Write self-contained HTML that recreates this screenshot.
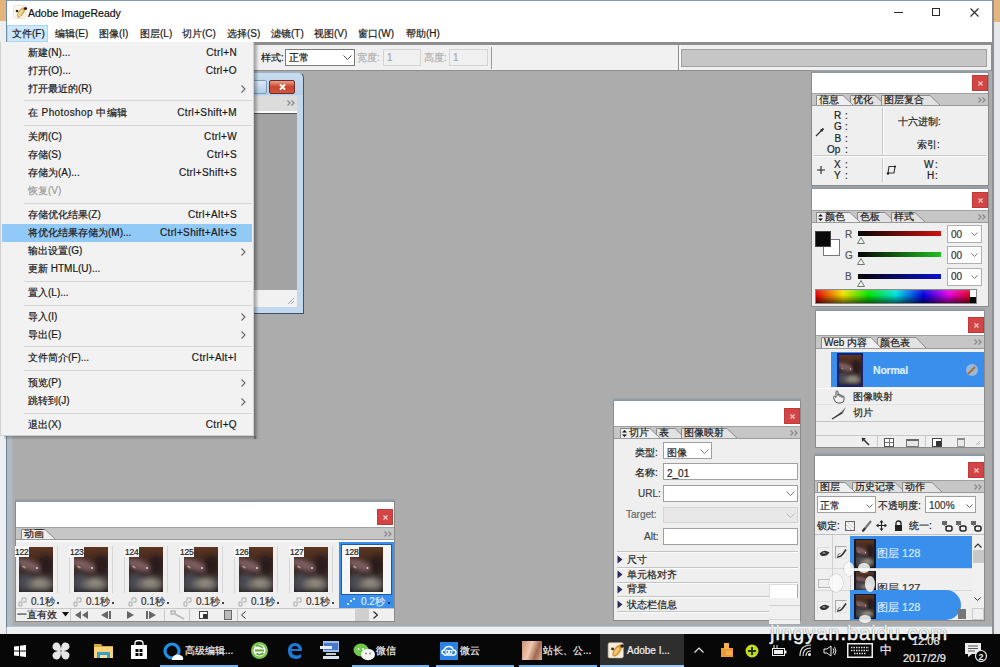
<!DOCTYPE html>
<html><head><meta charset="utf-8"><style>
*{box-sizing:border-box;margin:0;padding:0}
html,body{width:1000px;height:667px;overflow:hidden;background:#acacac;font-family:"Liberation Sans",sans-serif;color:#1e1e1e}
.a{position:absolute}
.t{position:absolute;white-space:nowrap;font-size:10px;line-height:12px;-webkit-text-stroke:0.2px currentColor}
.sc{letter-spacing:0.35px}
.box{position:absolute;background:#fff;border:1px solid #a8a8a8}
</style></head><body>
<svg width="0" height="0" style="position:absolute"><defs>
<filter id="bl" x="-20%" y="-20%" width="140%" height="140%"><feGaussianBlur stdDeviation="2"/></filter>
<linearGradient id="pg" x1="0" y1="0" x2="0" y2="1"><stop offset="0" stop-color="#5e3620"/><stop offset=".35" stop-color="#3c2620"/><stop offset=".7" stop-color="#3a3232"/><stop offset="1" stop-color="#2a2220"/></linearGradient>
<symbol id="photo" viewBox="0 0 34 45" preserveAspectRatio="none">
<rect width="34" height="45" fill="url(#pg)"/>
<g filter="url(#bl)">
<ellipse cx="10" cy="18" rx="13" ry="5" transform="rotate(20 10 18)" fill="#7a5c5e"/>
<ellipse cx="27" cy="18" rx="7" ry="10" fill="#2a1e1c"/>
<ellipse cx="7" cy="36" rx="8" ry="9" fill="#4a4a52"/>
<ellipse cx="21" cy="37" rx="13" ry="7" fill="#6c6864"/>
<ellipse cx="21" cy="36" rx="7" ry="4" fill="#8e887c"/>
<ellipse cx="17" cy="45" rx="16" ry="2.5" fill="#262220"/>
</g>
<ellipse cx="5" cy="20" rx="2" ry="1" fill="#b8a8a8" opacity=".8" transform="rotate(30 5 20)"/>
<circle cx="18" cy="21" r="1" fill="#d8d0c8"/>
</symbol></defs></svg>
<div class="a" style="left:0px;top:0px;width:6px;height:21px;background:#e3b47c"></div>
<div class="a" style="left:0px;top:21px;width:6px;height:613px;background:#eceef0"></div>
<div class="a" style="left:994px;top:0px;width:6px;height:22px;background:#e3b47c"></div>
<div class="a" style="left:994px;top:22px;width:6px;height:612px;background:#e4e6e8"></div>
<div class="a" style="left:6px;top:0px;width:988px;height:634px;background:#acacac"></div>
<div class="a" style="left:6px;top:0px;width:988px;height:1px;background:#7f9dbb"></div>
<div class="a" style="left:6px;top:0px;width:1px;height:42px;background:#6f8aa6"></div>
<div class="a" style="left:6px;top:71px;width:1px;height:556px;background:#6d8292"></div>
<div class="a" style="left:7px;top:71px;width:6px;height:556px;background:linear-gradient(90deg,#aab8c2,#b4bcc4 50%,#aeb2b6)"></div>
<div class="a" style="left:992px;top:71px;width:1px;height:556px;background:#c4c8cc"></div>
<div class="a" style="left:992px;top:0px;width:2px;height:634px;background:#8c9096"></div>
<div class="a" style="left:7px;top:1px;width:985px;height:41px;background:#fff"></div>
<svg class="a" style="left:12px;top:4px" width="16" height="16" viewBox="0 0 16 16"><rect x="1.5" y="1.5" width="12.5" height="13" rx="2" fill="#fbf7ef" stroke="#e4dccc" stroke-width=".8"/><ellipse cx="9" cy="8.5" rx="2.8" ry="6" transform="rotate(35 9 8.5)" fill="#d8a858"/><ellipse cx="8.5" cy="9" rx="1.4" ry="4" transform="rotate(35 8.5 9)" fill="#f0d8a0"/><circle cx="5" cy="7" r="1.3" fill="#3a2a1a"/><circle cx="13.5" cy="4.5" r="1.6" fill="#2a1e10"/></svg>
<div class="t" style="left:28px;top:7.0px;font-size:10.5px;line-height:12px;color:#111">Adobe ImageReady</div>
<div class="a" style="left:894px;top:12px;width:9px;height:1px;background:#2a2a2a"></div>
<div class="a" style="left:932px;top:8px;width:8px;height:8px;border:1px solid #2a2a2a"></div>
<svg class="a" style="left:970px;top:8px" width="9" height="9"><path d="M0.5 0.5 L8.5 8.5 M8.5 0.5 L0.5 8.5" stroke="#2a2a2a" stroke-width="1.1"/></svg>
<div class="a" style="left:7px;top:25px;width:41px;height:17px;background:#cce8ff;border:1px solid #a8d6fb"></div>
<div class="t" style="left:12px;top:28.0px;font-size:10px;line-height:12px;color:#1a1a1a">文件(F)</div>
<div class="t" style="left:55px;top:28.0px;font-size:10px;line-height:12px;color:#1a1a1a">编辑(E)</div>
<div class="t" style="left:99px;top:28.0px;font-size:10px;line-height:12px;color:#1a1a1a">图像(I)</div>
<div class="t" style="left:140px;top:28.0px;font-size:10px;line-height:12px;color:#1a1a1a">图层(L)</div>
<div class="t" style="left:182px;top:28.0px;font-size:10px;line-height:12px;color:#1a1a1a">切片(C)</div>
<div class="t" style="left:227px;top:28.0px;font-size:10px;line-height:12px;color:#1a1a1a">选择(S)</div>
<div class="t" style="left:271px;top:28.0px;font-size:10px;line-height:12px;color:#1a1a1a">滤镜(T)</div>
<div class="t" style="left:314px;top:28.0px;font-size:10px;line-height:12px;color:#1a1a1a">视图(V)</div>
<div class="t" style="left:358px;top:28.0px;font-size:10px;line-height:12px;color:#1a1a1a">窗口(W)</div>
<div class="t" style="left:406px;top:28.0px;font-size:10px;line-height:12px;color:#1a1a1a">帮助(H)</div>
<div class="a" style="left:7px;top:42px;width:985px;height:3px;background:#8e8e8e"></div>
<div class="a" style="left:7px;top:45px;width:985px;height:25px;background:#f0f0f0"></div>
<div class="a" style="left:991px;top:45px;width:1px;height:26px;background:#909090"></div>
<div class="a" style="left:7px;top:70px;width:985px;height:1px;background:#8e8e8e"></div>
<div class="t" style="left:261px;top:51.5px;font-size:10px;line-height:12px;color:#1a1a1a">样式:</div>
<div class="box" style="left:285px;top:49px;width:70px;height:17px;border-color:#7a7a7a"></div>
<div class="t" style="left:289px;top:51.5px;font-size:10px;line-height:12px;color:#111">正常</div>
<svg class="a" style="left:343px;top:55px" width="9" height="6"><path d="M0.5 0.5 L4.5 4.5 L8.5 0.5" stroke="#555" fill="none" stroke-width="1"/></svg>
<div class="t" style="left:357px;top:51.5px;font-size:10px;line-height:12px;color:#b0b0b0">宽度:</div>
<div class="box" style="left:383px;top:49px;width:38px;height:17px;background:#f0f0f0;border-color:#d4d4d4"></div>
<div class="t" style="left:387px;top:51.5px;font-size:10px;line-height:12px;color:#a8a8a8">1</div>
<div class="t" style="left:424px;top:51.5px;font-size:10px;line-height:12px;color:#b0b0b0">高度:</div>
<div class="box" style="left:449px;top:49px;width:39px;height:17px;background:#f0f0f0;border-color:#d4d4d4"></div>
<div class="t" style="left:453px;top:51.5px;font-size:10px;line-height:12px;color:#a8a8a8">1</div>
<div class="a" style="left:491px;top:47px;width:1px;height:22px;background:#999"></div>
<div class="a" style="left:678px;top:45px;width:1px;height:25px;background:#8c8c8c"></div>
<div class="a" style="left:679px;top:45px;width:2px;height:25px;background:#fafafa"></div>
<div class="a" style="left:681px;top:49px;width:306px;height:18px;background:#c6c6c6;border:1px solid #a0a0a0"></div>
<div class="a" style="left:7px;top:626px;width:985px;height:8px;background:#eef0f2"></div>
<div class="a" style="left:7px;top:626px;width:985px;height:1px;background:#b0c6dc"></div>
<div class="a" style="left:150px;top:72px;width:154px;height:242px;background:#c3d9ef;border:1px solid #3a5566;border-top-color:#9ab4cc;border-radius:6px 6px 0 0"></div>
<div class="a" style="left:150px;top:73px;width:153px;height:22px;background:linear-gradient(#c9dcef,#b8d0e8);border-radius:6px 6px 0 0"></div>
<div class="a" style="left:230px;top:80px;width:37px;height:14px;background:linear-gradient(#dbe8f5,#b0cbe6);border:1px solid #7f9cbb;border-radius:2px"></div>
<div class="a" style="left:269px;top:80px;width:26px;height:14px;background:linear-gradient(#e8a090,#c8452c 50%,#d0583c);border:1px solid #6e2a20;border-radius:2px"></div>
<svg class="a" style="left:278px;top:83px" width="9" height="8"><path d="M2 1.5 L7 6.5 M7 1.5 L2 6.5" stroke="#fff" stroke-width="1.8"/></svg>
<div class="a" style="left:155px;top:96px;width:142px;height:15px;background:#dcdcdc"></div>
<svg class="a" style="left:287px;top:100px" width="8" height="6"><path d="M0.5 0.5 L3 3 L0.5 5.5 M4.5 0.5 L7 3 L4.5 5.5" stroke="#888" fill="none" stroke-width="1.2"/></svg>
<div class="a" style="left:155px;top:111px;width:142px;height:2px;background:#fafafa"></div>
<div class="a" style="left:155px;top:113px;width:142px;height:1px;background:#555"></div>
<div class="a" style="left:155px;top:114px;width:142px;height:176px;background:#a3a3a3"></div>
<div class="a" style="left:155px;top:290px;width:142px;height:17px;background:#f1f1f1"></div>
<svg class="a" style="left:287px;top:297px" width="8" height="8"><path d="M7 1 L1 7 M7 4 L4 7" stroke="#aaa" stroke-width="1"/></svg>
<div class="a" style="left:811px;top:72px;width:178px;height:114px;background:#efefef;border:1px solid #8a8a8a"></div>
<div class="a" style="left:811px;top:70px;width:178px;height:3px;background:linear-gradient(#a0a4a8,#8a96a2)"></div>
<div class="a" style="left:812px;top:73px;width:176px;height:21px;background:#fff"></div>
<div class="a" style="left:972px;top:75px;width:16px;height:16px;background:#d34545;box-shadow:inset 0 0 0 1px #c03a3a"><svg class="a" style="left:5.5px;top:5.5px" width="5" height="5"><path d="M0.5 0.5 L4.5 4.5 M4.5 0.5 L0.5 4.5" stroke="#f6c6c6" stroke-width="1.3"/></svg></div>
<svg class="a" style="left:812px;top:93px" width="176" height="13"><rect x="0" y="0" width="176" height="13" fill="#c6c6c6"/><line x1="0" y1="0.5" x2="176" y2="0.5" stroke="#a0a0a0"/><path d="M38.5 13 L38.5 2.5 L63 2.5 L74 13" fill="#e2e2e2" stroke="#8a8a8a" stroke-width="1"/><path d="M69.5 13 L69.5 2.5 L118 2.5 L129 13" fill="#e2e2e2" stroke="#8a8a8a" stroke-width="1"/><path d="M4.5 13 L4.5 2.5 L31 2.5 L42 13" fill="#efefef" stroke="#8a8a8a" stroke-width="1"/><line x1="0" y1="12.5" x2="176" y2="12.5" stroke="#9a9a9a"/></svg>
<div class="t" style="left:819px;top:94.0px;font-size:10px;line-height:12px;color:#1a1a1a">信息</div>
<div class="t" style="left:853px;top:94.0px;font-size:10px;line-height:12px;color:#1a1a1a">优化</div>
<div class="t" style="left:884px;top:94.0px;font-size:10px;line-height:12px;color:#1a1a1a">图层复合</div>
<svg class="a" style="left:978px;top:96.5px" width="8" height="6"><path d="M0.5 0.5 L3 3 L0.5 5.5 M4.5 0.5 L7 3 L4.5 5.5" stroke="#888" fill="none" stroke-width="1.2"/></svg>
<div class="a" style="left:882px;top:108px;width:1px;height:47px;background:#c8c8c8"></div>
<div class="a" style="left:883px;top:108px;width:1px;height:47px;background:#fff"></div>
<div class="a" style="left:814px;top:155px;width:172px;height:1px;background:#c8c8c8"></div>
<div class="a" style="left:814px;top:156px;width:172px;height:1px;background:#fff"></div>
<div class="a" style="left:882px;top:158px;width:1px;height:25px;background:#c8c8c8"></div>
<div class="a" style="left:883px;top:158px;width:1px;height:25px;background:#fff"></div>
<div class="t" style="left:834px;top:109.5px;font-size:10px;line-height:12px;color:#222">R</div>
<div class="t" style="left:845px;top:109.5px;font-size:10px;line-height:12px;color:#222">:</div>
<div class="t" style="left:834px;top:121.0px;font-size:10px;line-height:12px;color:#222">G</div>
<div class="t" style="left:845px;top:121.0px;font-size:10px;line-height:12px;color:#222">:</div>
<div class="t" style="left:834.5px;top:132.5px;font-size:10px;line-height:12px;color:#222">B</div>
<div class="t" style="left:845px;top:132.5px;font-size:10px;line-height:12px;color:#222">:</div>
<div class="t" style="left:827px;top:144.0px;font-size:10px;line-height:12px;color:#222">Op</div>
<div class="t" style="left:845px;top:144.0px;font-size:10px;line-height:12px;color:#222">:</div>
<div class="t" style="left:834px;top:158.5px;font-size:10px;line-height:12px;color:#222">X</div>
<div class="t" style="left:845px;top:158.5px;font-size:10px;line-height:12px;color:#222">:</div>
<div class="t" style="left:834px;top:170.0px;font-size:10px;line-height:12px;color:#222">Y</div>
<div class="t" style="left:845px;top:170.0px;font-size:10px;line-height:12px;color:#222">:</div>
<svg class="a" style="left:815px;top:127px" width="10" height="10"><path d="M1 9 L6 4" stroke="#333" stroke-width="1.3"/><path d="M5 3 L8 1 L9 2 L7 5 Z" fill="#222"/></svg>
<svg class="a" style="left:817px;top:166px" width="8" height="8"><path d="M4 0 V8 M0 4 H8" stroke="#222" stroke-width="1.1"/></svg>
<svg class="a" style="left:886px;top:165px" width="10" height="10"><path d="M3 1.5 H9 L8 8 H2 Z" stroke="#333" stroke-width="1.1" fill="none"/><circle cx="2" cy="8.5" r="1.2" fill="#222"/><circle cx="9" cy="1.5" r="1" fill="#222"/></svg>
<div class="t" style="left:898px;top:116.0px;font-size:10px;line-height:12px;color:#222">十六进制:</div>
<div class="t" style="left:917px;top:139.0px;font-size:10px;line-height:12px;color:#222">索引:</div>
<div class="t" style="left:924px;top:158.5px;font-size:10px;line-height:12px;color:#222">W</div>
<div class="t" style="left:935px;top:158.5px;font-size:10px;line-height:12px;color:#222">:</div>
<div class="t" style="left:927px;top:170.0px;font-size:10px;line-height:12px;color:#222">H</div>
<div class="t" style="left:935px;top:170.0px;font-size:10px;line-height:12px;color:#222">:</div>
<div class="a" style="left:811px;top:188px;width:178px;height:119px;background:#efefef;border:1px solid #8a8a8a"></div>
<div class="a" style="left:811px;top:186px;width:178px;height:3px;background:linear-gradient(#a0a4a8,#8a96a2)"></div>
<div class="a" style="left:812px;top:189px;width:176px;height:21px;background:#fff"></div>
<div class="a" style="left:972px;top:192px;width:16px;height:16px;background:#d34545;box-shadow:inset 0 0 0 1px #c03a3a"><svg class="a" style="left:5.5px;top:5.5px" width="5" height="5"><path d="M0.5 0.5 L4.5 4.5 M4.5 0.5 L0.5 4.5" stroke="#f6c6c6" stroke-width="1.3"/></svg></div>
<svg class="a" style="left:812px;top:210px" width="176" height="13"><rect x="0" y="0" width="176" height="13" fill="#c6c6c6"/><line x1="0" y1="0.5" x2="176" y2="0.5" stroke="#a0a0a0"/><path d="M45.5 13 L45.5 2.5 L73 2.5 L84 13" fill="#e2e2e2" stroke="#8a8a8a" stroke-width="1"/><path d="M79.5 13 L79.5 2.5 L103 2.5 L114 13" fill="#e2e2e2" stroke="#8a8a8a" stroke-width="1"/><path d="M4.5 13 L4.5 2.5 L38 2.5 L49 13" fill="#efefef" stroke="#8a8a8a" stroke-width="1"/><line x1="0" y1="12.5" x2="176" y2="12.5" stroke="#9a9a9a"/></svg>
<svg class="a" style="left:818px;top:213.5px" width="5" height="7"><path d="M2.5 0 L5 2.5 H0 Z M0 4.5 H5 L2.5 7 Z" fill="#111"/></svg>
<div class="t" style="left:825px;top:211.0px;font-size:10px;line-height:12px;color:#1a1a1a">颜色</div>
<div class="t" style="left:860px;top:211.0px;font-size:10px;line-height:12px;color:#1a1a1a">色板</div>
<div class="t" style="left:894px;top:211.0px;font-size:10px;line-height:12px;color:#1a1a1a">样式</div>
<svg class="a" style="left:978px;top:213.5px" width="8" height="6"><path d="M0.5 0.5 L3 3 L0.5 5.5 M4.5 0.5 L7 3 L4.5 5.5" stroke="#888" fill="none" stroke-width="1.2"/></svg>
<div class="a" style="left:823px;top:239px;width:17px;height:17px;background:#fff;border:1px solid #777"></div>
<div class="a" style="left:815px;top:231px;width:16px;height:16px;background:#0a0a0a;border:1px solid #444"></div>
<div class="t" style="left:845px;top:228.5px;font-size:10px;line-height:12px;color:#555">R</div>
<div class="a" style="left:858px;top:231px;width:83px;height:5px;background:linear-gradient(90deg,#050505,#d01010)"></div>
<svg class="a" style="left:857px;top:237px" width="8" height="7"><path d="M4 0.5 L7.5 6.5 H0.5 Z" fill="#f4f4f4" stroke="#6a7a6a"/></svg>
<div class="box" style="left:947px;top:225px;width:35px;height:18px;border-color:#b0b0b0"></div>
<div class="t" style="left:951px;top:228.5px;font-size:10px;line-height:12px;color:#333">00</div>
<svg class="a" style="left:971px;top:232px" width="7" height="5"><path d="M0.5 0.5 L3.5 3.5 L6.5 0.5" stroke="#777" fill="none" stroke-width="1"/></svg>
<div class="t" style="left:845px;top:249.5px;font-size:10px;line-height:12px;color:#555">G</div>
<div class="a" style="left:858px;top:252px;width:83px;height:5px;background:linear-gradient(90deg,#050505,#20c020)"></div>
<svg class="a" style="left:857px;top:258px" width="8" height="7"><path d="M4 0.5 L7.5 6.5 H0.5 Z" fill="#f4f4f4" stroke="#6a7a6a"/></svg>
<div class="box" style="left:947px;top:246px;width:35px;height:18px;border-color:#b0b0b0"></div>
<div class="t" style="left:951px;top:249.5px;font-size:10px;line-height:12px;color:#333">00</div>
<svg class="a" style="left:971px;top:253px" width="7" height="5"><path d="M0.5 0.5 L3.5 3.5 L6.5 0.5" stroke="#777" fill="none" stroke-width="1"/></svg>
<div class="t" style="left:845px;top:271.0px;font-size:10px;line-height:12px;color:#555">B</div>
<div class="a" style="left:858px;top:274px;width:83px;height:5px;background:linear-gradient(90deg,#050505,#0a10d0)"></div>
<svg class="a" style="left:857px;top:280px" width="8" height="7"><path d="M4 0.5 L7.5 6.5 H0.5 Z" fill="#f4f4f4" stroke="#6a7a6a"/></svg>
<div class="box" style="left:947px;top:268px;width:35px;height:18px;border-color:#b0b0b0"></div>
<div class="t" style="left:951px;top:271.0px;font-size:10px;line-height:12px;color:#333">00</div>
<svg class="a" style="left:971px;top:275px" width="7" height="5"><path d="M0.5 0.5 L3.5 3.5 L6.5 0.5" stroke="#777" fill="none" stroke-width="1"/></svg>
<div class="a" style="left:815px;top:289px;width:162px;height:15px;background:linear-gradient(90deg,#e00000 0%,#f0e000 17%,#00e000 33%,#00e0e0 50%,#0000e0 67%,#e000e0 83%,#e00020 96%);border:1px solid #888"></div>
<div class="a" style="left:970px;top:290px;width:6px;height:7px;background:#fff"></div>
<div class="a" style="left:970px;top:297px;width:6px;height:6px;background:#000"></div>
<div class="a" style="left:816px;top:290px;width:154px;height:13px;background:linear-gradient(180deg,rgba(255,255,255,.15),rgba(0,0,0,0) 40%,rgba(0,0,0,.6))"></div>
<div class="a" style="left:815px;top:310px;width:170px;height:138px;background:#efefef;border:1px solid #8a8a8a"></div>
<div class="a" style="left:815px;top:308px;width:170px;height:3px;background:linear-gradient(#a0a4a8,#8a96a2)"></div>
<div class="a" style="left:816px;top:311px;width:168px;height:25px;background:#fff"></div>
<div class="a" style="left:968px;top:317px;width:16px;height:16px;background:#d34545;box-shadow:inset 0 0 0 1px #c03a3a"><svg class="a" style="left:5.5px;top:5.5px" width="5" height="5"><path d="M0.5 0.5 L4.5 4.5 M4.5 0.5 L0.5 4.5" stroke="#f6c6c6" stroke-width="1.3"/></svg></div>
<svg class="a" style="left:816px;top:335px" width="168" height="14"><rect x="0" y="0" width="168" height="14" fill="#c6c6c6"/><line x1="0" y1="0.5" x2="168" y2="0.5" stroke="#a0a0a0"/><path d="M61.5 14 L61.5 2.5 L100 2.5 L111 14" fill="#e2e2e2" stroke="#8a8a8a" stroke-width="1"/><path d="M5.5 14 L5.5 2.5 L55 2.5 L66 14" fill="#efefef" stroke="#8a8a8a" stroke-width="1"/><line x1="0" y1="13.5" x2="168" y2="13.5" stroke="#9a9a9a"/></svg>
<div class="t" style="left:824px;top:336.5px;font-size:10px;line-height:12px;color:#1a1a1a">Web 内容</div>
<div class="t" style="left:880px;top:336.5px;font-size:10px;line-height:12px;color:#1a1a1a">颜色表</div>
<svg class="a" style="left:974px;top:339.0px" width="8" height="6"><path d="M0.5 0.5 L3 3 L0.5 5.5 M4.5 0.5 L7 3 L4.5 5.5" stroke="#888" fill="none" stroke-width="1.2"/></svg>
<div class="a" style="left:816px;top:349px;width:168px;height:3px;background:#efefef"></div>
<div class="a" style="left:831px;top:352px;width:153px;height:35px;background:#3a8eec"></div>
<div class="a" style="left:837px;top:353px;width:26px;height:34px;background:#1a2070;padding:2px"><svg width="22" height="30" style="display:block"><use href="#photo" width="22" height="30"/></svg></div>
<div class="t" style="left:873px;top:364.0px;font-size:10.5px;line-height:12px;color:#dceeff;font-weight:bold;letter-spacing:-0.2px">Normal</div>
<svg class="a" style="left:965px;top:363px" width="14" height="14"><circle cx="7" cy="7" r="6" fill="#9ab8d8"/><path d="M3 11 L10 4" stroke="#b07030" stroke-width="2"/></svg>
<div class="a" style="left:816px;top:388px;width:168px;height:1px;background:#fafafa"></div>
<div class="a" style="left:816px;top:404px;width:168px;height:1px;background:#e2e2e2"></div>
<svg class="a" style="left:832px;top:390px" width="14" height="14"><path d="M4 7 V2 a1 1 0 0 1 2 0 V6 M6 5 a1 1 0 0 1 2 0 V7 M8 6 a1 1 0 0 1 2 0 V8 M10 7 a1 1 0 0 1 2 0 V10 Q12 13 8 13 H6 Q3 13 2 9 L1.5 7.5 a1 1 0 0 1 2 -0.5 L4 8" stroke="#555" fill="none" stroke-width="1"/></svg>
<div class="t" style="left:853px;top:391.0px;font-size:10px;line-height:12px;color:#222">图像映射</div>
<svg class="a" style="left:831px;top:406px" width="17" height="14"><path d="M1 13 L10 6 L15 1 L12 7 Z" fill="#666"/><path d="M1 13 L11 7" stroke="#333" stroke-width="1.2"/></svg>
<div class="t" style="left:853px;top:407.0px;font-size:10px;line-height:12px;color:#222">切片</div>
<div class="a" style="left:816px;top:421px;width:168px;height:1px;background:#c4c4c4"></div>
<div class="a" style="left:816px;top:435px;width:168px;height:1px;background:#c8c8c8"></div>
<div class="a" style="left:877px;top:436px;width:1px;height:11px;background:#c8c8c8"></div>
<div class="a" style="left:925px;top:436px;width:1px;height:11px;background:#c8c8c8"></div>
<svg class="a" style="left:861px;top:437px" width="9" height="9"><path d="M1 1 L8 8" stroke="#333" stroke-width="1.6"/><path d="M1 1 H5 L1 5 Z" fill="#333"/></svg>
<div class="a" style="left:884px;top:438px;width:10px;height:9px;border:1px solid #555;background:linear-gradient(90deg,transparent 4px,#777 4px,#777 5px,transparent 5px),linear-gradient(180deg,transparent 3px,#777 3px,#777 4px,transparent 4px) #fafafa"></div>
<div class="a" style="left:906px;top:439px;width:13px;height:8px;border:1px solid #777;border-top:2px solid #666;background:#e6e6e6"></div>
<div class="a" style="left:932px;top:438px;width:10px;height:9px;border:1px solid #444;background:#fff"><div class="a" style="right:0;bottom:0;width:5px;height:5px;background:#333"></div></div>
<div class="a" style="left:957px;top:438px;width:8px;height:9px;border:1px solid #999;border-top:2px solid #888;background:#e8e8e8"></div>
<svg class="a" style="left:975px;top:440px" width="6" height="6"><path d="M5 1 L1 5 M5 3 L3 5" stroke="#bbb"/></svg>
<div class="a" style="left:814px;top:455px;width:171px;height:166px;background:#efefef;border:1px solid #8a8a8a"></div>
<div class="a" style="left:814px;top:453px;width:171px;height:3px;background:linear-gradient(#a0a4a8,#8a96a2)"></div>
<div class="a" style="left:815px;top:456px;width:169px;height:25px;background:#fff"></div>
<div class="a" style="left:968px;top:462px;width:16px;height:16px;background:#d34545;box-shadow:inset 0 0 0 1px #c03a3a"><svg class="a" style="left:5.5px;top:5.5px" width="5" height="5"><path d="M0.5 0.5 L4.5 4.5 M4.5 0.5 L0.5 4.5" stroke="#f6c6c6" stroke-width="1.3"/></svg></div>
<svg class="a" style="left:815px;top:480px" width="169" height="13"><rect x="0" y="0" width="169" height="13" fill="#c6c6c6"/><line x1="0" y1="0.5" x2="169" y2="0.5" stroke="#a0a0a0"/><path d="M37.5 13 L37.5 2.5 L80 2.5 L91 13" fill="#e2e2e2" stroke="#8a8a8a" stroke-width="1"/><path d="M87.5 13 L87.5 2.5 L117 2.5 L128 13" fill="#e2e2e2" stroke="#8a8a8a" stroke-width="1"/><path d="M2.5 13 L2.5 2.5 L30 2.5 L41 13" fill="#efefef" stroke="#8a8a8a" stroke-width="1"/><line x1="0" y1="12.5" x2="169" y2="12.5" stroke="#9a9a9a"/></svg>
<div class="t" style="left:820px;top:481.0px;font-size:10px;line-height:12px;color:#1a1a1a">图层</div>
<div class="t" style="left:855px;top:481.0px;font-size:10px;line-height:12px;color:#1a1a1a">历史记录</div>
<div class="t" style="left:905px;top:481.0px;font-size:10px;line-height:12px;color:#1a1a1a">动作</div>
<svg class="a" style="left:974px;top:483.5px" width="8" height="6"><path d="M0.5 0.5 L3 3 L0.5 5.5 M4.5 0.5 L7 3 L4.5 5.5" stroke="#888" fill="none" stroke-width="1.2"/></svg>
<div class="box" style="left:817px;top:496px;width:59px;height:17px;border-color:#a0a0a0"></div>
<div class="t" style="left:820px;top:499.5px;font-size:10px;line-height:12px;color:#222">正常</div>
<svg class="a" style="left:866px;top:504px" width="7" height="5"><path d="M0.5 0.5 L3.5 3.5 L6.5 0.5" stroke="#666" fill="none" stroke-width="1"/></svg>
<div class="t" style="left:878px;top:499.5px;font-size:10px;line-height:12px;color:#222">不透明度:</div>
<div class="box" style="left:925px;top:496px;width:51px;height:17px;border-color:#a0a0a0"></div>
<div class="t" style="left:929px;top:499.5px;font-size:10px;line-height:12px;color:#333">100%</div>
<svg class="a" style="left:966px;top:504px" width="7" height="5"><path d="M0.5 0.5 L3.5 3.5 L6.5 0.5" stroke="#666" fill="none" stroke-width="1"/></svg>
<div class="t" style="left:817px;top:520.0px;font-size:10px;line-height:12px;color:#222">锁定:</div>
<div class="a" style="left:845px;top:521px;width:10px;height:10px;border:1px solid #666;background:repeating-linear-gradient(45deg,#d8d8d8 0 1.5px,#fff 1.5px 3px)"></div>
<svg class="a" style="left:861px;top:519px" width="12" height="13"><path d="M2 12 L10 2" stroke="#777" stroke-width="2.2"/><path d="M1.5 12.5 L4 9" stroke="#333" stroke-width="2"/></svg>
<svg class="a" style="left:876px;top:520px" width="11" height="11"><path d="M5.5 1 V10 M1 5.5 H10" stroke="#222" stroke-width="1.1"/><path d="M5.5 0 L3.5 2.5 H7.5Z M5.5 11 L3.5 8.5 H7.5Z M0 5.5 L2.5 3.5 V7.5Z M11 5.5 L8.5 3.5 V7.5Z" fill="#222"/></svg>
<svg class="a" style="left:894px;top:520px" width="9" height="11"><path d="M2 5 V3.5 Q2 1 4.5 1 Q7 1 7 3.5 V5" stroke="#222" fill="none" stroke-width="1.3"/><rect x="1" y="5" width="7" height="6" fill="#222"/></svg>
<div class="t" style="left:909px;top:520.0px;font-size:10px;line-height:12px;color:#222">统一:</div>
<svg class="a" style="left:941px;top:520px" width="12" height="12"><path d="M1 3 L6 8" stroke="#888" stroke-width="1"/><rect x="1" y="1" width="5" height="4" fill="#666"/><rect x="5" y="6" width="6" height="5" rx="2" fill="none" stroke="#222" stroke-width="1.5"/></svg>
<svg class="a" style="left:955px;top:520px" width="12" height="12"><path d="M1 3 L6 8" stroke="#888" stroke-width="1"/><rect x="1" y="1" width="5" height="4" fill="#666"/><rect x="5" y="6" width="6" height="5" rx="2" fill="none" stroke="#222" stroke-width="1.5"/></svg>
<svg class="a" style="left:970px;top:520px" width="12" height="12"><path d="M1 3 L6 8" stroke="#888" stroke-width="1"/><rect x="1" y="1" width="5" height="4" fill="#666"/><rect x="5" y="6" width="6" height="5" rx="2" fill="none" stroke="#222" stroke-width="1.5"/></svg>
<div class="a" style="left:815px;top:534px;width:169px;height:1px;background:#c0c0c0"></div>
<div class="a" style="left:815px;top:535px;width:157px;height:85px;background:#efefef"></div>
<div class="a" style="left:832px;top:535px;width:1px;height:85px;background:#d0d0d0"></div>
<div class="a" style="left:850px;top:535px;width:1px;height:85px;background:#d0d0d0"></div>
<div class="a" style="left:815px;top:568px;width:157px;height:1px;background:#d8d8d8"></div>
<div class="a" style="left:815px;top:590px;width:157px;height:1px;background:#d8d8d8"></div>
<div class="a" style="left:972px;top:535px;width:12px;height:73px;background:#f0f0f0"></div>
<svg class="a" style="left:974px;top:543px" width="8" height="5"><path d="M0.5 4.5 L4 1 L7.5 4.5" stroke="#333" fill="none" stroke-width="1.2"/></svg>
<div class="a" style="left:973px;top:550px;width:11px;height:13px;background:#c8c8c8"></div>
<svg class="a" style="left:974px;top:597px" width="7" height="5"><path d="M0.5 0.5 L3.5 3.5 L6.5 0.5" stroke="#333" fill="none" stroke-width="1"/></svg>
<div class="a" style="left:817px;top:547px;width:13px;height:13px;border:1px solid #ddd;border-right:none;border-bottom:none"></div>
<svg class="a" style="left:819px;top:549px" width="11" height="9"><path d="M0.5 4.5 Q5 -0.5 10.5 3.5 Q7 8.5 2 6.5 Z" fill="#333"/><ellipse cx="5" cy="4" rx="1.6" ry="1.1" fill="#888"/></svg>
<div class="a" style="left:835px;top:546px;width:12px;height:13px;border:1px solid #aaa;border-right-color:#e4e4e4;border-bottom-color:#e4e4e4"></div>
<svg class="a" style="left:836px;top:548px" width="11" height="10"><path d="M1 9 Q4 9.5 6.5 6.5 L10 1.5" stroke="#333" fill="none" stroke-width="1.6"/><path d="M1.5 8.5 Q2 5 4.5 5.5" stroke="#777" fill="none" stroke-width="1"/></svg>
<div class="a" style="left:850px;top:536px;width:122px;height:32px;background:#3a8eec"></div>
<div class="a" style="left:854px;top:539px;width:22px;height:29px;background:#141a2a;padding:1px 2px"><svg width="18" height="27" style="display:block"><use href="#photo" width="18" height="27"/></svg></div>
<div class="t" style="left:877px;top:547.0px;font-size:11px;line-height:12px;color:#d8ecff">图层 128</div>
<div class="a" style="left:818px;top:579px;width:12px;height:9px;border:1px solid #bbb;border-right:none"></div>
<div class="a" style="left:854px;top:571px;width:22px;height:20px;background:#141a2a;padding:1px 2px"><svg width="18" height="18" style="display:block"><use href="#photo" width="18" height="18"/></svg></div>
<div class="t" style="left:877px;top:582.0px;font-size:11px;line-height:12px;color:#333">图层 127</div>
<div class="a" style="left:817px;top:601px;width:13px;height:13px;border:1px solid #ddd;border-right:none;border-bottom:none"></div>
<svg class="a" style="left:819px;top:603px" width="11" height="9"><path d="M0.5 4.5 Q5 -0.5 10.5 3.5 Q7 8.5 2 6.5 Z" fill="#333"/><ellipse cx="5" cy="4" rx="1.6" ry="1.1" fill="#888"/></svg>
<div class="a" style="left:835px;top:600px;width:12px;height:13px;border:1px solid #aaa;border-right-color:#e4e4e4;border-bottom-color:#e4e4e4"></div>
<svg class="a" style="left:836px;top:602px" width="11" height="10"><path d="M1 9 Q4 9.5 6.5 6.5 L10 1.5" stroke="#333" fill="none" stroke-width="1.6"/><path d="M1.5 8.5 Q2 5 4.5 5.5" stroke="#777" fill="none" stroke-width="1"/></svg>
<div class="a" style="left:850px;top:590px;width:111px;height:30px;background:#3a8eec;border-radius:0 15px 15px 0"></div>
<div class="a" style="left:854px;top:594px;width:22px;height:25px;background:#141a2a;padding:1px 2px"><svg width="18" height="23" style="display:block"><use href="#photo" width="18" height="23"/></svg></div>
<div class="t" style="left:877px;top:600.5px;font-size:11px;line-height:12px;color:#d8ecff">图层 128</div>
<div class="a" style="left:958px;top:609px;width:8px;height:10px;background:#777"></div>
<div class="a" style="left:972px;top:608px;width:12px;height:12px;background:#f0f0f0;border:1px solid #ccc"></div>
<div class="a" style="left:843.5px;top:561.5px;width:10px;height:14px;border-radius:50%;background:rgba(250,250,250,.85);box-shadow:0 0 0 0.6px rgba(120,120,120,.35)"></div>
<div class="a" style="left:858px;top:563px;width:12px;height:10px;border-radius:50%;background:rgba(250,250,250,.85);box-shadow:0 0 0 0.6px rgba(120,120,120,.35)"></div>
<div class="a" style="left:829px;top:574px;width:14px;height:18px;border-radius:50%;background:rgba(250,250,250,.85);box-shadow:0 0 0 0.6px rgba(120,120,120,.35)"></div>
<div class="a" style="left:865px;top:576px;width:10px;height:16px;border-radius:50%;background:rgba(250,250,250,.85);box-shadow:0 0 0 0.6px rgba(120,120,120,.35)"></div>
<div class="a" style="left:859px;top:615px;width:12px;height:8px;border-radius:50%;background:rgba(250,250,250,.85);box-shadow:0 0 0 0.6px rgba(120,120,120,.35)"></div>
<div class="a" style="left:613px;top:400px;width:188px;height:221px;background:#efefef;border:1px solid #8a8a8a"></div>
<div class="a" style="left:613px;top:398px;width:188px;height:3px;background:linear-gradient(#a0a4a8,#8a96a2)"></div>
<div class="a" style="left:614px;top:401px;width:186px;height:25px;background:#fff"></div>
<div class="a" style="left:784px;top:408px;width:16px;height:16px;background:#d34545;box-shadow:inset 0 0 0 1px #c03a3a"><svg class="a" style="left:5.5px;top:5.5px" width="5" height="5"><path d="M0.5 0.5 L4.5 4.5 M4.5 0.5 L0.5 4.5" stroke="#f6c6c6" stroke-width="1.3"/></svg></div>
<svg class="a" style="left:614px;top:426px" width="186" height="13"><rect x="0" y="0" width="186" height="13" fill="#c6c6c6"/><line x1="0" y1="0.5" x2="186" y2="0.5" stroke="#a0a0a0"/><path d="M42.5 13 L42.5 2.5 L61 2.5 L72 13" fill="#e2e2e2" stroke="#8a8a8a" stroke-width="1"/><path d="M67.5 13 L67.5 2.5 L113 2.5 L124 13" fill="#e2e2e2" stroke="#8a8a8a" stroke-width="1"/><path d="M6.5 13 L6.5 2.5 L36 2.5 L47 13" fill="#efefef" stroke="#8a8a8a" stroke-width="1"/><line x1="0" y1="12.5" x2="186" y2="12.5" stroke="#9a9a9a"/></svg>
<svg class="a" style="left:622px;top:429.5px" width="5" height="7"><path d="M2.5 0 L5 2.5 H0 Z M0 4.5 H5 L2.5 7 Z" fill="#111"/></svg>
<div class="t" style="left:629px;top:427.0px;font-size:10px;line-height:12px;color:#1a1a1a">切片</div>
<div class="t" style="left:659px;top:427.0px;font-size:10px;line-height:12px;color:#1a1a1a">表</div>
<div class="t" style="left:684px;top:427.0px;font-size:10px;line-height:12px;color:#1a1a1a">图像映射</div>
<svg class="a" style="left:790px;top:429.5px" width="8" height="6"><path d="M0.5 0.5 L3 3 L0.5 5.5 M4.5 0.5 L7 3 L4.5 5.5" stroke="#888" fill="none" stroke-width="1.2"/></svg>
<div class="t" style="left:635px;top:446.5px;font-size:10px;line-height:12px;color:#222">类型:</div>
<div class="box" style="left:663px;top:442px;width:49px;height:17px;border-color:#a0a0a0"></div>
<div class="t" style="left:667px;top:446.5px;font-size:10px;line-height:12px;color:#222">图像</div>
<svg class="a" style="left:700px;top:449px" width="9" height="6"><path d="M0.5 0.5 L4.5 4.5 L8.5 0.5" stroke="#777" fill="none" stroke-width="1"/></svg>
<div class="t" style="left:635px;top:467.0px;font-size:10px;line-height:12px;color:#222">名称:</div>
<div class="box" style="left:663px;top:463px;width:135px;height:17px;border-color:#a0a0a0"></div>
<div class="t" style="left:667px;top:467.5px;font-size:10px;line-height:12px;color:#222">2_01</div>
<div class="t" style="left:638px;top:487.5px;font-size:10px;line-height:12px;color:#444">URL:</div>
<div class="box" style="left:663px;top:485px;width:135px;height:17px;border-color:#a0a0a0"></div>
<svg class="a" style="left:786px;top:491px" width="9" height="6"><path d="M0.5 0.5 L4.5 4.5 L8.5 0.5" stroke="#777" fill="none" stroke-width="1"/></svg>
<div class="t" style="left:626px;top:509.0px;font-size:10px;line-height:12px;color:#666">Target:</div>
<div class="box" style="left:663px;top:507px;width:135px;height:16px;background:#e8e8e8;border-color:#d4d4d4"></div>
<svg class="a" style="left:786px;top:513px" width="9" height="6"><path d="M0.5 0.5 L4.5 4.5 L8.5 0.5" stroke="#bbb" fill="none" stroke-width="1"/></svg>
<div class="t" style="left:644px;top:530.5px;font-size:10px;line-height:12px;color:#444">Alt:</div>
<div class="box" style="left:663px;top:528px;width:135px;height:17px;border-color:#a0a0a0"></div>
<div class="a" style="left:617px;top:551px;width:181px;height:1px;background:#c4c4c4"></div>
<div class="a" style="left:617px;top:552px;width:181px;height:1px;background:#fbfbfb"></div>
<div class="a" style="left:617px;top:567px;width:181px;height:1px;background:#c4c4c4"></div>
<div class="a" style="left:617px;top:568px;width:181px;height:1px;background:#fbfbfb"></div>
<div class="a" style="left:617px;top:582px;width:181px;height:1px;background:#c4c4c4"></div>
<div class="a" style="left:617px;top:583px;width:181px;height:1px;background:#fbfbfb"></div>
<div class="a" style="left:617px;top:596px;width:181px;height:1px;background:#c4c4c4"></div>
<div class="a" style="left:617px;top:597px;width:181px;height:1px;background:#fbfbfb"></div>
<div class="a" style="left:617px;top:611px;width:181px;height:1px;background:#c4c4c4"></div>
<div class="a" style="left:617px;top:612px;width:181px;height:1px;background:#fbfbfb"></div>
<svg class="a" style="left:617px;top:555.0px" width="6" height="9"><path d="M0.5 0.5 L5.5 4.5 L0.5 8.5 Z" fill="#2a2a5a"/></svg>
<div class="t" style="left:627px;top:553.5px;font-size:10px;line-height:12px;color:#222">尺寸</div>
<svg class="a" style="left:617px;top:570.0px" width="6" height="9"><path d="M0.5 0.5 L5.5 4.5 L0.5 8.5 Z" fill="#2a2a5a"/></svg>
<div class="t" style="left:627px;top:568.5px;font-size:10px;line-height:12px;color:#222">单元格对齐</div>
<svg class="a" style="left:617px;top:584.5px" width="6" height="9"><path d="M0.5 0.5 L5.5 4.5 L0.5 8.5 Z" fill="#2a2a5a"/></svg>
<div class="t" style="left:627px;top:583.0px;font-size:10px;line-height:12px;color:#222">背景</div>
<svg class="a" style="left:617px;top:600.0px" width="6" height="9"><path d="M0.5 0.5 L5.5 4.5 L0.5 8.5 Z" fill="#2a2a5a"/></svg>
<div class="t" style="left:627px;top:598.5px;font-size:10px;line-height:12px;color:#222">状态栏信息</div>
<div class="a" style="left:769px;top:584px;width:29px;height:15px;background:#fff;border:1px solid #ddd;border-bottom-color:#aaa;border-right-color:#aaa"></div>
<div class="a" style="left:769px;top:598px;width:31px;height:26px;background:#f0f0f0"></div>
<div class="a" style="left:769px;top:605px;width:31px;height:1px;background:#d0d0d0"></div>
<div class="a" style="left:769px;top:619px;width:31px;height:1px;background:#d8d8d8"></div>
<div class="a" style="left:15px;top:501px;width:380px;height:121px;background:#efefef;border:1px solid #8a8a8a;border-top:1px solid #5a6a7a"></div>
<div class="a" style="left:15px;top:499px;width:380px;height:3px;background:linear-gradient(#a0a4a8,#8a96a2)"></div>
<div class="a" style="left:16px;top:502px;width:378px;height:25px;background:#fff"></div>
<div class="a" style="left:377px;top:509px;width:16px;height:16px;background:#d34545;box-shadow:inset 0 0 0 1px #c03a3a"><svg class="a" style="left:5.5px;top:5.5px" width="5" height="5"><path d="M0.5 0.5 L4.5 4.5 M4.5 0.5 L0.5 4.5" stroke="#f6c6c6" stroke-width="1.3"/></svg></div>
<svg class="a" style="left:16px;top:527px" width="378" height="13"><rect x="0" y="0" width="378" height="13" fill="#c6c6c6"/><line x1="0" y1="0.5" x2="378" y2="0.5" stroke="#a0a0a0"/><path d="M5.5 13 L5.5 2.5 L29 2.5 L40 13" fill="#efefef" stroke="#8a8a8a" stroke-width="1"/><line x1="0" y1="12.5" x2="378" y2="12.5" stroke="#9a9a9a"/></svg>
<div class="t" style="left:24px;top:528.0px;font-size:10px;line-height:12px;color:#1a1a1a">动画</div>
<svg class="a" style="left:384px;top:530.5px" width="8" height="6"><path d="M0.5 0.5 L3 3 L0.5 5.5 M4.5 0.5 L7 3 L4.5 5.5" stroke="#888" fill="none" stroke-width="1.2"/></svg>
<div class="a" style="left:16px;top:540px;width:378px;height:2px;background:#fafafa"></div>
<div class="a" style="left:14px;top:546px;width:1px;height:47px;background:#d6d6d6"></div>
<div class="a" style="left:57px;top:546px;width:1px;height:47px;background:#d6d6d6"></div>
<svg class="a" style="left:19px;top:547px" width="34" height="45"><use href="#photo" width="34" height="45"/></svg>
<div class="a" style="left:14px;top:546px;width:15px;height:11px;background:#f6f6f6"></div>
<div class="t" style="left:15px;top:545.5px;font-size:8.5px;line-height:12px;color:#222;letter-spacing:-0.2px">122</div>
<svg class="a" style="left:18px;top:597px" width="9" height="10"><path d="M1 9 V5 H4 V9 Z M4 4 V1 H8 V5 H5" stroke="#aaa" fill="none" stroke-width="1"/></svg>
<div class="t" style="left:31px;top:596.0px;font-size:10px;line-height:12px;color:#333">0.1秒</div>
<div class="a" style="left:57px;top:602px;width:2px;height:2px;background:#444"></div>
<div class="a" style="left:69px;top:546px;width:1px;height:47px;background:#d6d6d6"></div>
<div class="a" style="left:112px;top:546px;width:1px;height:47px;background:#d6d6d6"></div>
<svg class="a" style="left:74px;top:547px" width="34" height="45"><use href="#photo" width="34" height="45"/></svg>
<div class="a" style="left:69px;top:546px;width:15px;height:11px;background:#f6f6f6"></div>
<div class="t" style="left:70px;top:545.5px;font-size:8.5px;line-height:12px;color:#222;letter-spacing:-0.2px">123</div>
<svg class="a" style="left:73px;top:597px" width="9" height="10"><path d="M1 9 V5 H4 V9 Z M4 4 V1 H8 V5 H5" stroke="#aaa" fill="none" stroke-width="1"/></svg>
<div class="t" style="left:86px;top:596.0px;font-size:10px;line-height:12px;color:#333">0.1秒</div>
<div class="a" style="left:112px;top:602px;width:2px;height:2px;background:#444"></div>
<div class="a" style="left:124px;top:546px;width:1px;height:47px;background:#d6d6d6"></div>
<div class="a" style="left:167px;top:546px;width:1px;height:47px;background:#d6d6d6"></div>
<svg class="a" style="left:129px;top:547px" width="34" height="45"><use href="#photo" width="34" height="45"/></svg>
<div class="a" style="left:124px;top:546px;width:15px;height:11px;background:#f6f6f6"></div>
<div class="t" style="left:125px;top:545.5px;font-size:8.5px;line-height:12px;color:#222;letter-spacing:-0.2px">124</div>
<svg class="a" style="left:128px;top:597px" width="9" height="10"><path d="M1 9 V5 H4 V9 Z M4 4 V1 H8 V5 H5" stroke="#aaa" fill="none" stroke-width="1"/></svg>
<div class="t" style="left:141px;top:596.0px;font-size:10px;line-height:12px;color:#333">0.1秒</div>
<div class="a" style="left:167px;top:602px;width:2px;height:2px;background:#444"></div>
<div class="a" style="left:179px;top:546px;width:1px;height:47px;background:#d6d6d6"></div>
<div class="a" style="left:222px;top:546px;width:1px;height:47px;background:#d6d6d6"></div>
<svg class="a" style="left:184px;top:547px" width="34" height="45"><use href="#photo" width="34" height="45"/></svg>
<div class="a" style="left:179px;top:546px;width:15px;height:11px;background:#f6f6f6"></div>
<div class="t" style="left:180px;top:545.5px;font-size:8.5px;line-height:12px;color:#222;letter-spacing:-0.2px">125</div>
<svg class="a" style="left:183px;top:597px" width="9" height="10"><path d="M1 9 V5 H4 V9 Z M4 4 V1 H8 V5 H5" stroke="#aaa" fill="none" stroke-width="1"/></svg>
<div class="t" style="left:196px;top:596.0px;font-size:10px;line-height:12px;color:#333">0.1秒</div>
<div class="a" style="left:222px;top:602px;width:2px;height:2px;background:#444"></div>
<div class="a" style="left:234px;top:546px;width:1px;height:47px;background:#d6d6d6"></div>
<div class="a" style="left:277px;top:546px;width:1px;height:47px;background:#d6d6d6"></div>
<svg class="a" style="left:239px;top:547px" width="34" height="45"><use href="#photo" width="34" height="45"/></svg>
<div class="a" style="left:234px;top:546px;width:15px;height:11px;background:#f6f6f6"></div>
<div class="t" style="left:235px;top:545.5px;font-size:8.5px;line-height:12px;color:#222;letter-spacing:-0.2px">126</div>
<svg class="a" style="left:238px;top:597px" width="9" height="10"><path d="M1 9 V5 H4 V9 Z M4 4 V1 H8 V5 H5" stroke="#aaa" fill="none" stroke-width="1"/></svg>
<div class="t" style="left:251px;top:596.0px;font-size:10px;line-height:12px;color:#333">0.1秒</div>
<div class="a" style="left:277px;top:602px;width:2px;height:2px;background:#444"></div>
<div class="a" style="left:289px;top:546px;width:1px;height:47px;background:#d6d6d6"></div>
<div class="a" style="left:332px;top:546px;width:1px;height:47px;background:#d6d6d6"></div>
<svg class="a" style="left:294px;top:547px" width="34" height="45"><use href="#photo" width="34" height="45"/></svg>
<div class="a" style="left:289px;top:546px;width:15px;height:11px;background:#f6f6f6"></div>
<div class="t" style="left:290px;top:545.5px;font-size:8.5px;line-height:12px;color:#222;letter-spacing:-0.2px">127</div>
<svg class="a" style="left:293px;top:597px" width="9" height="10"><path d="M1 9 V5 H4 V9 Z M4 4 V1 H8 V5 H5" stroke="#aaa" fill="none" stroke-width="1"/></svg>
<div class="t" style="left:306px;top:596.0px;font-size:10px;line-height:12px;color:#333">0.1秒</div>
<div class="a" style="left:332px;top:602px;width:2px;height:2px;background:#444"></div>
<div class="a" style="left:13px;top:540px;width:2px;height:81px;background:#acacac"></div>
<div class="a" style="left:339px;top:542px;width:55px;height:66px;background:#3a8eec"></div>
<div class="a" style="left:341px;top:544px;width:51px;height:51px;background:#f6f6f6;border:1px solid #1d5aa8"></div>
<svg class="a" style="left:350px;top:547px" width="33" height="45"><use href="#photo" width="33" height="45"/></svg>
<div class="a" style="left:344px;top:546px;width:15px;height:11px;background:#f6f6f6"></div>
<div class="t" style="left:345px;top:545.5px;font-size:8.5px;line-height:12px;color:#222;letter-spacing:-0.2px">128</div>
<svg class="a" style="left:346px;top:597px" width="10" height="9"><circle cx="2" cy="7" r="1" fill="#fff"/><circle cx="5" cy="4" r="1" fill="#fff"/><circle cx="8" cy="2" r="1" fill="#fff"/></svg>
<div class="t" style="left:361px;top:596.0px;font-size:10px;line-height:12px;color:#dbeeff">0.2秒</div>
<div class="a" style="left:388px;top:602px;width:2px;height:2px;background:#10306a"></div>
<div class="a" style="left:16px;top:608px;width:378px;height:1px;background:#c8c8c8"></div>
<div class="a" style="left:16px;top:609px;width:378px;height:12px;background:#f0f0f0"></div>
<div class="t" style="left:17px;top:609.0px;font-size:10px;line-height:12px;color:#222">一直有效</div>
<svg class="a" style="left:62px;top:612px" width="7" height="5"><path d="M0 0 H7 L3.5 4.5 Z" fill="#111"/></svg>
<div class="a" style="left:70px;top:609px;width:1px;height:12px;background:#c8c8c8"></div>
<div class="a" style="left:164px;top:609px;width:1px;height:12px;background:#c8c8c8"></div>
<div class="a" style="left:189px;top:609px;width:1px;height:12px;background:#c8c8c8"></div>
<div class="a" style="left:237px;top:609px;width:1px;height:12px;background:#c8c8c8"></div>
<svg class="a" style="left:74px;top:610px" width="90" height="10"><path d="M1 5 L7 1 V9 Z M8 5 L14 1 V9 Z" fill="#666"/><path d="M27 5 L34 1 V9 Z" fill="#666"/><rect x="35" y="1" width="2" height="8" fill="#666"/><path d="M53 1 L60 5 L53 9 Z" fill="#666"/><rect x="72" y="1" width="2" height="8" fill="#666"/><path d="M75 1 L82 5 L75 9 Z" fill="#666"/></svg>
<svg class="a" style="left:170px;top:610px" width="16" height="10"><rect x="1" y="1" width="4" height="3" fill="none" stroke="#999"/><path d="M5 4 L14 9" stroke="#bbb" stroke-width="2"/></svg>
<div class="a" style="left:199px;top:611px;width:9px;height:8px;border:1px solid #444;background:#fff"><div class="a" style="right:0;bottom:0;width:4px;height:4px;background:#333"></div></div>
<div class="a" style="left:224px;top:610px;width:8px;height:10px;border:1px solid #666;background:#bbb"></div>
<svg class="a" style="left:241px;top:611px" width="5" height="8"><path d="M4.5 0.5 L0.5 4 L4.5 7.5" stroke="#333" fill="none"/></svg>
<div class="a" style="left:355px;top:609px;width:14px;height:12px;background:#cfcfcf"></div>
<svg class="a" style="left:373px;top:611px" width="5" height="8"><path d="M0.5 0.5 L4.5 4 L0.5 7.5" stroke="#222" fill="none" stroke-width="1.2"/></svg>
<div class="a" style="left:254px;top:45px;width:5px;height:394px;background:linear-gradient(90deg,rgba(0,0,0,.35),rgba(0,0,0,0))"></div>
<div class="a" style="left:4px;top:436px;width:252px;height:4px;background:linear-gradient(180deg,rgba(0,0,0,.25),rgba(0,0,0,0))"></div>
<div class="a" style="left:0;top:42px;width:254px;height:394px;background:#f2f2f2;border:1px solid #d0d0d0;border-top:none"></div>
<div class="a" style="left:2px;top:224px;width:250px;height:18px;background:#91c9f7"></div>
<div class="t" style="left:28px;top:46.6px;font-size:10px;line-height:12px;color:#1a1a1a">新建(N)...</div>
<div class="t" style="right:763px;top:46.6px;font-size:10px;line-height:12px;color:#1a1a1a;letter-spacing:0.35px">Ctrl+N</div>
<div class="t" style="left:28px;top:64.6px;font-size:10px;line-height:12px;color:#1a1a1a">打开(O)...</div>
<div class="t" style="right:763px;top:64.6px;font-size:10px;line-height:12px;color:#1a1a1a;letter-spacing:0.35px">Ctrl+O</div>
<div class="t" style="left:28px;top:82.6px;font-size:10px;line-height:12px;color:#1a1a1a">打开最近的(R)</div>
<svg class="a" style="left:241px;top:85px" width="5" height="8"><path d="M0.5 0.5 L4 4 L0.5 7.5" stroke="#666" fill="none" stroke-width="1.1"/></svg>
<div class="a" style="left:24px;top:100px;width:228px;height:1px;background:#d6d6d6"></div>
<div class="t" style="left:28px;top:106.6px;font-size:10px;line-height:12px;color:#1a1a1a;letter-spacing:0.4px">在 Photoshop 中编辑</div>
<div class="t" style="right:763px;top:106.6px;font-size:10px;line-height:12px;color:#1a1a1a;letter-spacing:0.35px">Ctrl+Shift+M</div>
<div class="a" style="left:24px;top:125px;width:228px;height:1px;background:#d6d6d6"></div>
<div class="t" style="left:28px;top:130.5px;font-size:10px;line-height:12px;color:#1a1a1a">关闭(C)</div>
<div class="t" style="right:763px;top:130.5px;font-size:10px;line-height:12px;color:#1a1a1a;letter-spacing:0.35px">Ctrl+W</div>
<div class="t" style="left:28px;top:148.5px;font-size:10px;line-height:12px;color:#1a1a1a">存储(S)</div>
<div class="t" style="right:763px;top:148.5px;font-size:10px;line-height:12px;color:#1a1a1a;letter-spacing:0.35px">Ctrl+S</div>
<div class="t" style="left:28px;top:166.5px;font-size:10px;line-height:12px;color:#1a1a1a">存储为(A)...</div>
<div class="t" style="right:763px;top:166.5px;font-size:10px;line-height:12px;color:#1a1a1a;letter-spacing:0.35px">Ctrl+Shift+S</div>
<div class="t" style="left:28px;top:184.5px;font-size:10px;line-height:12px;color:#9c9c9c">恢复(V)</div>
<div class="a" style="left:24px;top:203px;width:228px;height:1px;background:#d6d6d6"></div>
<div class="t" style="left:28px;top:208.5px;font-size:10px;line-height:12px;color:#1a1a1a">存储优化结果(Z)</div>
<div class="t" style="right:763px;top:208.5px;font-size:10px;line-height:12px;color:#1a1a1a;letter-spacing:0.35px">Ctrl+Alt+S</div>
<div class="t" style="left:28px;top:226.5px;font-size:10px;line-height:12px;color:#1a1a1a">将优化结果存储为(M)...</div>
<div class="t" style="right:763px;top:226.5px;font-size:10px;line-height:12px;color:#1a1a1a;letter-spacing:0.35px">Ctrl+Shift+Alt+S</div>
<div class="t" style="left:28px;top:245.0px;font-size:10px;line-height:12px;color:#1a1a1a">输出设置(G)</div>
<svg class="a" style="left:241px;top:248px" width="5" height="8"><path d="M0.5 0.5 L4 4 L0.5 7.5" stroke="#666" fill="none" stroke-width="1.1"/></svg>
<div class="t" style="left:28px;top:263.0px;font-size:10px;line-height:12px;color:#1a1a1a">更新 HTML(U)...</div>
<div class="a" style="left:24px;top:281px;width:228px;height:1px;background:#d6d6d6"></div>
<div class="t" style="left:28px;top:287.0px;font-size:10px;line-height:12px;color:#1a1a1a">置入(L)...</div>
<div class="a" style="left:24px;top:305px;width:228px;height:1px;background:#d6d6d6"></div>
<div class="t" style="left:28px;top:310.6px;font-size:10px;line-height:12px;color:#1a1a1a">导入(I)</div>
<svg class="a" style="left:241px;top:313px" width="5" height="8"><path d="M0.5 0.5 L4 4 L0.5 7.5" stroke="#666" fill="none" stroke-width="1.1"/></svg>
<div class="t" style="left:28px;top:328.8px;font-size:10px;line-height:12px;color:#1a1a1a">导出(E)</div>
<svg class="a" style="left:241px;top:331px" width="5" height="8"><path d="M0.5 0.5 L4 4 L0.5 7.5" stroke="#666" fill="none" stroke-width="1.1"/></svg>
<div class="a" style="left:24px;top:346px;width:228px;height:1px;background:#d6d6d6"></div>
<div class="t" style="left:28px;top:352.4px;font-size:10px;line-height:12px;color:#1a1a1a">文件简介(F)...</div>
<div class="t" style="right:763px;top:352.4px;font-size:10px;line-height:12px;color:#1a1a1a;letter-spacing:0.35px">Ctrl+Alt+I</div>
<div class="a" style="left:24px;top:370px;width:228px;height:1px;background:#d6d6d6"></div>
<div class="t" style="left:28px;top:376.6px;font-size:10px;line-height:12px;color:#1a1a1a">预览(P)</div>
<svg class="a" style="left:241px;top:379px" width="5" height="8"><path d="M0.5 0.5 L4 4 L0.5 7.5" stroke="#666" fill="none" stroke-width="1.1"/></svg>
<div class="t" style="left:28px;top:395.0px;font-size:10px;line-height:12px;color:#1a1a1a">跳转到(J)</div>
<svg class="a" style="left:241px;top:398px" width="5" height="8"><path d="M0.5 0.5 L4 4 L0.5 7.5" stroke="#666" fill="none" stroke-width="1.1"/></svg>
<div class="a" style="left:24px;top:413px;width:228px;height:1px;background:#d6d6d6"></div>
<div class="t" style="left:28px;top:418.5px;font-size:10px;line-height:12px;color:#1a1a1a">退出(X)</div>
<div class="t" style="right:763px;top:418.5px;font-size:10px;line-height:12px;color:#1a1a1a;letter-spacing:0.35px">Ctrl+Q</div>
<div class="a" style="left:0px;top:634px;width:1000px;height:33px;background:#070707"></div>
<svg class="a" style="left:14px;top:645px" width="12" height="12"><path d="M0 1.6 L5 0.9 V5.6 H0 Z M6 0.8 L12 0 V5.6 H6 Z M0 6.4 H5 V11.1 L0 10.4 Z M6 6.4 H12 V12 L6 11.2 Z" fill="#fff"/></svg>
<svg class="a" style="left:52px;top:642px" width="18" height="18" viewBox="0 0 18 18"><g fill="#e6e6e6"><path d="M9 8.2 C9 3 7 0.5 4.5 0.5 C2 0.5 0.5 2.5 0.5 5 C0.5 7.5 3 9 8.2 9 Z"/><path d="M9.8 9 C15 9 17.5 7 17.5 4.5 C17.5 2 15.5 0.5 13 0.5 C10.5 0.5 9 3 9 8.2 Z"/><path d="M9 9.8 C9 15 11 17.5 13.5 17.5 C16 17.5 17.5 15.5 17.5 13 C17.5 10.5 15 9 9.8 9 Z"/><path d="M8.2 9 C3 9 0.5 11 0.5 13.5 C0.5 16 2.5 17.5 5 17.5 C7.5 17.5 9 15 9 9.8 Z"/></g></svg>
<svg class="a" style="left:94px;top:643px" width="19" height="15"><path d="M0 1 H7 L8.5 3 H19 V15 H0 Z" fill="#d8a840"/><rect x="0" y="4" width="19" height="11" fill="#f6d47c"/><path d="M3 15 V9 H16 V15 H13 V12 H6 V15 Z" fill="#3aa0c8"/><rect x="6" y="12" width="7" height="3" fill="#f0e0a0"/></svg>
<svg class="a" style="left:130px;top:640px" width="18" height="19"><path d="M5 5 V3 Q5 0.5 9 0.5 Q13 0.5 13 3 V5" stroke="#fff" fill="none" stroke-width="1.3"/><rect x="1" y="5" width="16" height="14" fill="#fff"/><rect x="5.5" y="9" width="3" height="3" fill="#070707"/><rect x="9.5" y="9" width="3" height="3" fill="#070707"/><rect x="5.5" y="13" width="3" height="3" fill="#070707"/><rect x="9.5" y="13" width="3" height="3" fill="#070707"/></svg>
<svg class="a" style="left:163px;top:642px" width="21" height="19"><circle cx="9" cy="9" r="7" stroke="#1e90e8" stroke-width="3.2" fill="none"/><path d="M9 16 Q12 11 17 13 Q21 14 20 18 H9 Z" fill="#fff"/></svg>
<div class="t" style="left:185px;top:645.0px;font-size:10px;line-height:12px;color:#f0f0f0">高级编辑...</div>
<div class="a" style="left:160px;top:665px;width:78px;height:2px;background:#7ab4e6"></div>
<svg class="a" style="left:250px;top:641px" width="19" height="19"><circle cx="9.5" cy="9.5" r="8.5" fill="#7cc84a"/><circle cx="9.5" cy="9.5" r="6" fill="#fff"/><path d="M5 9.5 H14 M13.5 12 Q10 15 6.5 12.5" stroke="#5aa832" stroke-width="1.8" fill="none"/><path d="M6 5 Q9.5 4 13 7" stroke="#5aa832" stroke-width="1.5" fill="none"/></svg>
<svg class="a" style="left:286px;top:642px" width="17" height="17"><path d="M2 9 Q2 1 9 1 Q16 1 16 9 H5.5 Q6 13 10 13.5 Q13 13.5 15 12 V15.5 Q12.5 17 9.5 17 Q2 16.5 2 9 Z M5.5 7 H12.5 Q12 4 9 4 Q6 4 5.5 7Z" fill="#1c7ad6"/></svg>
<svg class="a" style="left:320px;top:641px" width="21" height="18"><rect x="3" y="0" width="16" height="11" fill="#9fc0e8"/><rect x="4" y="2" width="14" height="7" fill="#4a78c8"/><rect x="0" y="5" width="12" height="3" fill="#e8eef8"/><rect x="6" y="12" width="10" height="2" fill="#c0c8d0"/><rect x="3" y="15" width="16" height="3" fill="#d8e0e8"/></svg>
<svg class="a" style="left:353px;top:643px" width="23" height="18"><ellipse cx="8" cy="7" rx="7.5" ry="6.5" fill="#6fc84c"/><ellipse cx="15" cy="11.5" rx="7" ry="5.8" fill="#f4f4f4"/><circle cx="5.5" cy="6" r="1" fill="#fff"/><circle cx="10" cy="6" r="1" fill="#fff"/><circle cx="13" cy="10.5" r=".9" fill="#888"/><circle cx="17" cy="10.5" r=".9" fill="#888"/></svg>
<div class="t" style="left:376px;top:645.0px;font-size:10px;line-height:12px;color:#f0f0f0">微信</div>
<div class="a" style="left:352px;top:665px;width:77px;height:2px;background:#7ab4e6"></div>
<svg class="a" style="left:440px;top:642px" width="18" height="18"><rect width="18" height="18" fill="#2a82e4"/><path d="M4 12 Q2 12 2 10 Q2 8 4.5 8 Q5 4.5 9 4.5 Q12.5 4.5 13 8 Q16 8 16 10.5 Q16 13 13.5 13 H4.5Z" fill="none" stroke="#fff" stroke-width="1.4"/><circle cx="7.5" cy="10" r="1.6" fill="none" stroke="#fff" stroke-width="1.1"/><circle cx="10.5" cy="10" r="1.6" fill="none" stroke="#fff" stroke-width="1.1"/></svg>
<div class="t" style="left:460px;top:645.0px;font-size:10px;line-height:12px;color:#f0f0f0">微云</div>
<div class="a" style="left:436px;top:665px;width:78px;height:2px;background:#7ab4e6"></div>
<div class="a" style="left:522px;top:641px;width:20px;height:19px;background:linear-gradient(110deg,#c89070,#f0c8b0 40%,#a06850 70%,#e0b090)"></div>
<div class="t" style="left:543px;top:645.0px;font-size:10px;line-height:12px;color:#f0f0f0">站长、公...</div>
<div class="a" style="left:519px;top:665px;width:78px;height:2px;background:#7ab4e6"></div>
<div class="a" style="left:600px;top:634px;width:84px;height:33px;background:#2e2e2e"></div>
<svg class="a" style="left:607px;top:641px" width="18" height="18" viewBox="0 0 16 16"><rect x="1" y="1.5" width="13.5" height="13.5" rx="1.5" fill="#f6efe0" stroke="#c8b898" stroke-width=".6"/><ellipse cx="9" cy="8.5" rx="3" ry="6.2" transform="rotate(35 9 8.5)" fill="#d89838"/><ellipse cx="8.5" cy="9" rx="1.5" ry="4" transform="rotate(35 8.5 9)" fill="#f0c870"/><circle cx="5" cy="7" r="1.3" fill="#3a2a1a"/><circle cx="13.5" cy="4.5" r="1.6" fill="#2a1e10"/></svg>
<div class="t" style="left:627px;top:645.0px;font-size:10px;line-height:12px;color:#f4f4f4">Adobe I...</div>
<div class="a" style="left:600px;top:665px;width:84px;height:2px;background:#9ccaf2"></div>
<svg class="a" style="left:694px;top:647px" width="10" height="6"><path d="M0.5 5.5 L5 1 L9.5 5.5" stroke="#eee" fill="none" stroke-width="1.1"/></svg>
<svg class="a" style="left:720px;top:642px" width="14" height="16"><rect x="1" y="6" width="12" height="9" fill="#f09a30"/><rect x="4" y="1" width="5" height="6" fill="#f4b050"/><rect x="6" y="9" width="6" height="4" fill="#fff3"/></svg>
<svg class="a" style="left:745px;top:644px" width="14" height="14"><circle cx="7" cy="7" r="6.5" fill="#c8d820"/><path d="M7 3 V11 M3 7 H11" stroke="#1a3a1a" stroke-width="2"/></svg>
<svg class="a" style="left:771px;top:645px" width="16" height="11"><rect x="1.5" y="3.5" width="12" height="7" fill="none" stroke="#eee"/><rect x="3" y="5" width="9" height="4" fill="#eee"/><rect x="14" y="5.5" width="1.5" height="3" fill="#eee"/><path d="M3 0 V3 M6 0 V3" stroke="#eee"/></svg>
<svg class="a" style="left:799px;top:644px" width="13" height="13"><path d="M1 12 Q1 1 12 1 M4 12 Q4 4 12 4 M7 12 Q7 7 12 7" stroke="#ddd" fill="none" stroke-width="1.2"/><circle cx="10.5" cy="10.5" r="1.5" fill="#eee"/></svg>
<svg class="a" style="left:823px;top:645px" width="14" height="12"><path d="M1 4 H4 L8 1 V11 L4 8 H1 Z" fill="none" stroke="#eee"/><path d="M10 3.5 Q12 6 10 8.5 M11.5 2 Q14.5 6 11.5 10" stroke="#eee" fill="none"/></svg>
<svg class="a" style="left:847px;top:643px" width="26" height="15"><rect x="0.75" y="0.75" width="24.5" height="13.5" fill="none" stroke="#eee" stroke-width="1.5"/><path d="M4 4.5 H22 M4 7.5 H22 M7 10.5 H19" stroke="#ddd" stroke-dasharray="1.5 1" stroke-width="1.3"/></svg>
<div class="t" style="left:880px;top:644.0px;font-size:12px;line-height:12px;color:#e8e8e8">中</div>
<div class="t" style="left:912px;top:635.0px;font-size:11px;line-height:12px;color:#f0f0f0">12:06</div>
<div class="t" style="left:903px;top:652.0px;font-size:11px;line-height:12px;color:#f0f0f0">2017/2/9</div>
<svg class="a" style="left:964px;top:642px" width="24" height="20"><path d="M1 1 H17 V12 H8 L4 15 V12 H1 Z" fill="#eee"/><path d="M4 4 H14 M4 6.5 H14 M4 9 H11" stroke="#555"/><circle cx="17" cy="14" r="5.5" fill="#070707" stroke="#eee" stroke-width="1.2"/><text x="17" y="17.5" font-size="9" text-anchor="middle" fill="#eee" font-family="Liberation Sans" font-weight="bold">2</text></svg>
<div class="a" style="left:770px;top:618px;font-size:20px;line-height:30px;white-space:nowrap;color:#f2f2f2;font-family:'Liberation Sans',sans-serif;-webkit-text-stroke:0.4px #f2f2f2;text-shadow:0 0 1px rgba(0,0,0,.6),0 0 1px rgba(0,0,0,.6);letter-spacing:1.0px">jingyan.baidu.com</div>
</body></html>
